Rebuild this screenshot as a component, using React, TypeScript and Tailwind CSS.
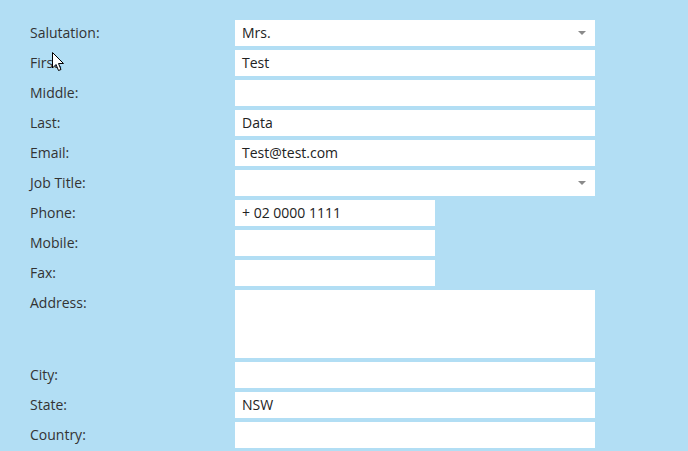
const ROWS: { label: string; value?: string; kind?: 'select' | 'short' | 'area' }[] = [
  { label: 'Salutation:', value: 'Mrs.', kind: 'select' },
  { label: 'First:', value: 'Test' },
  { label: 'Middle:' },
  { label: 'Last:', value: 'Data' },
  { label: 'Email:', value: 'Test@test.com' },
  { label: 'Job Title:', kind: 'select' },
  { label: 'Phone:', value: '+ 02 0000 1111', kind: 'short' },
  { label: 'Mobile:', kind: 'short' },
  { label: 'Fax:', kind: 'short' },
  { label: 'Address:', kind: 'area' },
  { label: 'City:' },
  { label: 'State:', value: 'NSW' },
  { label: 'Country:' },
]

const Field = ({ value, kind }: { value?: string; kind?: string }) => {
  const width = kind === 'short' ? 'w-[200px]' : 'w-[360px]'
  const height = kind === 'area' ? 'h-[68px]' : 'h-[26px]'
  return (
    <div className={`${width} ${height} bg-white flex items-start justify-between pl-[7px] pr-[9px]`}>
      <span className="leading-[26px] text-[14px] text-[#222]">{value}</span>
      {kind === 'select' && (
        <svg width="8" height="4" viewBox="0 0 8 4" className="mt-[11px]">
          <polygon points="0,0 8,0 4,4" fill="#8a8a8a" />
        </svg>
      )}
    </div>
  )
}

export default function App() {
  return (
    <div
      className="relative w-[688px] h-[451px] overflow-hidden bg-[#b2def4] pt-5 pl-[30px]"
      style={{ fontFamily: '"Open Sans", sans-serif' }}
    >
      <div className="flex flex-col gap-1">
        {ROWS.map((row) => (
          <div key={row.label} className="flex">
            <label className="w-[205px] shrink-0 leading-[26px] text-[14px] text-[#333]">{row.label}</label>
            <Field value={row.value} kind={row.kind} />
          </div>
        ))}
      </div>

      {/* mouse pointer */}
      <svg width="13" height="20" viewBox="0 0 13 20" className="absolute left-[52px] top-[52px]">
        <path d="M0.5 0.5 L0.5 16 L4 12.5 L6.5 18.5 L9 17.5 L6.5 11.5 L11.5 11.5 Z" fill="#fff" stroke="#000" strokeWidth="1" strokeLinejoin="round" />
      </svg>
    </div>
  )
}
